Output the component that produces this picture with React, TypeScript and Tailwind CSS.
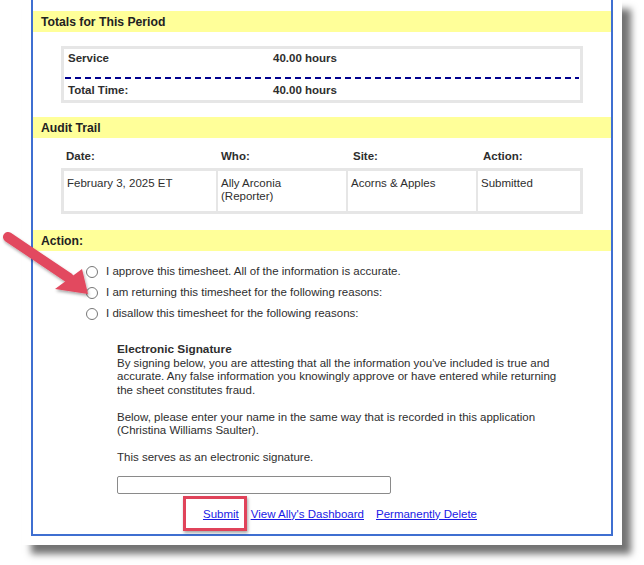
import React from 'react';

const font = { fontFamily: '"Liberation Sans", Arial, sans-serif' };

const SectionHeader = ({ title }: { title: string }) => (
  <div className="h-[21px] bg-[#ffff99] pl-[8px] text-[12.2px] font-bold leading-[22px] text-[#222]">
    {title}
  </div>
);

const Radio = ({ label }: { label: string }) => (
  <label className="flex h-[21px] items-center">
    <span className="ml-[53px] h-[12px] w-[12px] rounded-full border border-[#777] bg-white" />
    <span className="ml-[8px]">{label}</span>
  </label>
);

const App = () => {
  const audit = [
    { date: 'February 3, 2025 ET', who: ['Ally Arconia', '(Reporter)'], site: 'Acorns & Apples', action: 'Submitted' },
  ];

  return (
    <div className="relative h-[565px] w-[644px] overflow-hidden bg-white text-[11.5px] text-[#2e2e2e]" style={font}>
      {/* outer screenshot frame with drop shadow */}
      <div className="ml-[22px] w-[600px] bg-white pb-[9px] pl-[9px] pr-[9px] shadow-[9px_9px_7px_rgba(0,0,0,0.55)]">
        <div className="h-[536px] border-x-2 border-b-2 border-[#3f6fd1] pt-[11px]">
          {/* Totals */}
          <SectionHeader title="Totals for This Period" />
          <div className="ml-[28px] mt-[14px] w-[522px] border-[3px] border-[#e6e6e6] font-bold">
            <div className="flex h-[28px] pl-[4px] pt-[3px] leading-[13px]">
              <span className="w-[205px]">Service</span>
              <span>40.00 hours</span>
            </div>
            <div className="mx-[1px] h-[2px] bg-[repeating-linear-gradient(90deg,#00008f_0_6px,transparent_6px_10px)]" />
            <div className="flex h-[21px] pl-[4px] pt-[5px] leading-[13px]">
              <span className="w-[205px]">Total Time:</span>
              <span>40.00 hours</span>
            </div>
          </div>

          {/* Audit trail */}
          <div className="mt-[14px]">
            <SectionHeader title="Audit Trail" />
          </div>
          <div className="ml-[28px] w-[522px]">
            <div className="flex h-[30px] items-end pb-[3px] font-bold">
              <span className="w-[155px] pl-[5px]">Date:</span>
              <span className="w-[130px] pl-[5px]">Who:</span>
              <span className="w-[130px] pl-[7px]">Site:</span>
              <span className="pl-[7px]">Action:</span>
            </div>
            <div className="border-[3px] border-[#e6e6e6]">
              {audit.map((row, i) => (
                <div key={i} className="flex h-[40px] leading-[13px]">
                  <div className="w-[152px] pl-[3px] pt-[6px]">{row.date}</div>
                  <div className="w-[130px] border-l-2 border-[#e6e6e6] pl-[3px] pt-[6px]">
                    {row.who.map((w) => (
                      <div key={w}>{w}</div>
                    ))}
                  </div>
                  <div className="w-[130px] border-l-2 border-[#e6e6e6] pl-[3px] pt-[6px]">{row.site}</div>
                  <div className="flex-1 border-l-2 border-[#e6e6e6] pl-[3px] pt-[6px]">{row.action}</div>
                </div>
              ))}
            </div>
          </div>

          {/* Action */}
          <div className="mt-[16px]">
            <SectionHeader title="Action:" />
          </div>
          <div className="mt-[10px]">
            <Radio label="I approve this timesheet. All of the information is accurate." />
            <Radio label="I am returning this timesheet for the following reasons:" />
            <Radio label="I disallow this timesheet for the following reasons:" />
          </div>

          <div className="ml-[84px] mt-[19px] w-[446px] leading-[13.5px]">
            <div className="text-[11.8px] font-bold">Electronic Signature</div>
            <p>
              By signing below, you are attesting that all the information you've included is true and accurate. Any
              false information you knowingly approve or have entered while returning the sheet constitutes fraud.
            </p>
            <p className="mt-[13.5px]">
              Below, please enter your name in the same way that is recorded in this application (Christina Williams
              Saulter).
            </p>
            <p className="mt-[13.5px]">This serves as an electronic signature.</p>
            <input className="mt-[11px] block h-[18px] w-[274px] rounded-[2px] border border-[#8a8a8a] bg-white" />
            <div className="mt-[14px] flex justify-center gap-[12px] text-[#1a1ae6] underline">
              <a href="#">Submit</a>
              <a href="#">View Ally's Dashboard</a>
              <a href="#">Permanently Delete</a>
            </div>
          </div>
        </div>
      </div>

      {/* annotation: red box around Submit */}
      <div className="absolute left-[183px] top-[496px] h-[35px] w-[64px] border-[3px] border-[#e0435a] shadow-[1px_2px_3px_rgba(0,0,0,0.35)]" />

      {/* annotation: arrow */}
      <svg className="absolute left-0 top-[222px]" width="110" height="80" viewBox="0 0 110 80">
        <defs>
          <filter id="sh" x="-20%" y="-20%" width="140%" height="140%">
            <feDropShadow dx="1" dy="2" stdDeviation="1.5" floodColor="#000" floodOpacity="0.35" />
          </filter>
        </defs>
        <g filter="url(#sh)" fill="#e2485f">
          <line x1="8" y1="15" x2="69" y2="56" stroke="#e2485f" strokeWidth="10" strokeLinecap="round" />
          <polygon points="55,67 82,47 88,72" />
        </g>
      </svg>
    </div>
  );
};

export default App;
